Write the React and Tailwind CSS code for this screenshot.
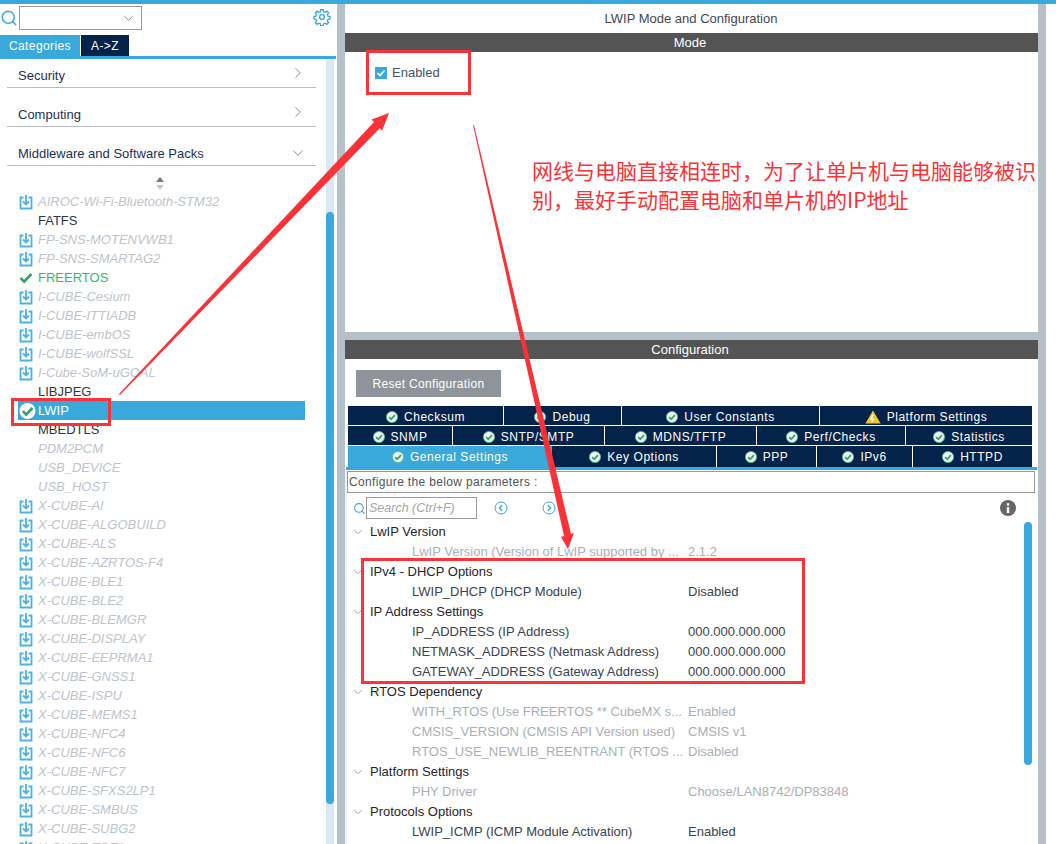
import React from 'react';
import { ChevronDown, ChevronRight, Search } from 'lucide-react';

const sideItems = [
  ['AIROC-Wi-Fi-Bluetooth-STM32', 'pack'],
  ['FATFS', 'plain'],
  ['FP-SNS-MOTENVWB1', 'pack'],
  ['FP-SNS-SMARTAG2', 'pack'],
  ['FREERTOS', 'ok'],
  ['I-CUBE-Cesium', 'pack'],
  ['I-CUBE-ITTIADB', 'pack'],
  ['I-CUBE-embOS', 'pack'],
  ['I-CUBE-wolfSSL', 'pack'],
  ['I-Cube-SoM-uGOAL', 'pack'],
  ['LIBJPEG', 'plain'],
  ['LWIP', 'selected'],
  ['MBEDTLS', 'plain'],
  ['PDM2PCM', 'off'],
  ['USB_DEVICE', 'off'],
  ['USB_HOST', 'off'],
  ['X-CUBE-AI', 'pack'],
  ['X-CUBE-ALGOBUILD', 'pack'],
  ['X-CUBE-ALS', 'pack'],
  ['X-CUBE-AZRTOS-F4', 'pack'],
  ['X-CUBE-BLE1', 'pack'],
  ['X-CUBE-BLE2', 'pack'],
  ['X-CUBE-BLEMGR', 'pack'],
  ['X-CUBE-DISPLAY', 'pack'],
  ['X-CUBE-EEPRMA1', 'pack'],
  ['X-CUBE-GNSS1', 'pack'],
  ['X-CUBE-ISPU', 'pack'],
  ['X-CUBE-MEMS1', 'pack'],
  ['X-CUBE-NFC4', 'pack'],
  ['X-CUBE-NFC6', 'pack'],
  ['X-CUBE-NFC7', 'pack'],
  ['X-CUBE-SFXS2LP1', 'pack'],
  ['X-CUBE-SMBUS', 'pack'],
  ['X-CUBE-SUBG2', 'pack'],
  ['X-CUBE-TOF1', 'pack'],
];

const tabRows = [
  { h: 'h-[19px]', pad: 'pt-[2px]', cells: [['Checksum', 'w-[156px]'], ['Debug', 'w-[118px]'], ['User Constants', 'w-[198px]'], ['Platform Settings', 'w-[212px]', 'warn']] },
  { h: 'h-[19px]', pad: 'pt-[2px]', cells: [['SNMP', 'w-[105px]'], ['SNTP/SMTP', 'w-[152px]'], ['MDNS/TFTP', 'w-[152px]'], ['Perf/Checks', 'w-[149px]'], ['Statistics', 'w-[126px]']] },
  { h: 'h-[21px]', pad: 'pt-0', cells: [['General Settings', 'w-[204px]', 'active'], ['Key Options', 'w-[165px]'], ['PPP', 'w-[100px]'], ['IPv6', 'w-[96px]'], ['HTTPD', 'w-[119px]']] },
];

const params = [
  ['LwIP Version', null, 'head'],
  ['LwIP Version (Version of LwIP supported by ...', '2.1.2', 'off'],
  ['IPv4 - DHCP Options', null, 'head'],
  ['LWIP_DHCP (DHCP Module)', 'Disabled', 'on'],
  ['IP Address Settings', null, 'head'],
  ['IP_ADDRESS (IP Address)', '000.000.000.000', 'on'],
  ['NETMASK_ADDRESS (Netmask Address)', '000.000.000.000', 'on'],
  ['GATEWAY_ADDRESS (Gateway Address)', '000.000.000.000', 'on'],
  ['RTOS Dependency', null, 'head'],
  ['WITH_RTOS (Use FREERTOS ** CubeMX s...', 'Enabled', 'off'],
  ['CMSIS_VERSION (CMSIS API Version used)', 'CMSIS v1', 'off'],
  ['RTOS_USE_NEWLIB_REENTRANT (RTOS ...', 'Disabled', 'off'],
  ['Platform Settings', null, 'head'],
  ['PHY Driver', 'Choose/LAN8742/DP83848', 'off'],
  ['Protocols Options', null, 'head'],
  ['LWIP_ICMP (ICMP Module Activation)', 'Enabled', 'on'],
];

function PackIcon() {
  return (
    <svg width="14" height="16" viewBox="0 0 14 16" fill="none" stroke="#4db2e3" strokeWidth="1.8">
      <path d="M4.5 3.5H1.5V14.5H12.5V3.5H9.5" />
      <path d="M7 1V10M4 7.5L7 10.5L10 7.5" strokeWidth="1.8" />
    </svg>
  );
}

function OkDot({ size = 12 }) {
  return (
    <svg width={size} height={size} viewBox="0 0 12 12" className="shrink-0">
      <circle cx="6" cy="6" r="5.6" fill="#e8f5ee" />
      <circle cx="6" cy="6" r="5.6" fill="none" stroke="#4fb584" strokeWidth="0.8" />
      <path d="M3.1 6.1L5.2 8.2L9 4.2" fill="none" stroke="#3a9f6e" strokeWidth="1.7" />
    </svg>
  );
}

function SideRow({ name, kind }) {
  if (kind === 'selected') {
    return (
      <div className="h-[19px] flex items-center bg-[#39a9dc] w-[287px] ml-[18px] text-white">
        <svg width="18" height="18" viewBox="0 0 18 18" className="shrink-0 ml-px">
          <circle cx="8.5" cy="9" r="8" fill="#ffffff" />
          <path d="M3.8 9.2L7.2 12.6L13.4 6" fill="none" stroke="#3a9f6e" strokeWidth="2.6" />
        </svg>
        <span className="ml-[1px] text-[13px]">{name}</span>
      </div>
    );
  }
  const text = {
    pack: 'italic text-[#bcc4cc]',
    off: 'italic text-[#bcc4cc]',
    plain: 'text-[#2f3640]',
    ok: 'text-[#3cb371]',
  }[kind];
  return (
    <div className="h-[19px] flex items-center pl-[19px]">
      <span className="w-[19px] shrink-0 flex items-center">
        {kind === 'pack' && <PackIcon />}
        {kind === 'ok' && (
          <svg width="14" height="12" viewBox="0 0 14 12" fill="none" stroke="#3a9f6e" strokeWidth="2.6">
            <path d="M1.5 6L5.2 9.6L12.5 2" />
          </svg>
        )}
      </span>
      <span className={`text-[13px] whitespace-nowrap ${text}`}>{name}</span>
    </div>
  );
}

function Category({ label, open, height }) {
  return (
    <div className={`${height} ml-[7px] w-[309px] border-b border-[#b5bcc4] flex items-end justify-between pb-[2px]`}>
      <span className="ml-[11px] text-[13px] text-[#1f2f52]">{label}</span>
      {open ? (
        <ChevronDown size={18} strokeWidth={1} className="text-[#666] mb-[1px] mr-[9px]" />
      ) : (
        <ChevronRight size={18} strokeWidth={1} className="text-[#666] mb-[3px] mr-[9px]" />
      )}
    </div>
  );
}

function Sidebar() {
  return (
    <div className="w-[337px] h-full flex flex-col overflow-hidden">
      <div className="h-[31px] flex items-start shrink-0">
        <Search size={18} strokeWidth={2} className="text-[#39a9dc] mt-[5px]" />
        <div className="ml-[1px] w-[123px] h-[24px] border border-[#999] flex items-center justify-end pr-[5px] mt-[2px]">
          <ChevronDown size={15} strokeWidth={1.2} className="text-[#666]" />
        </div>
        <svg width="18" height="18" viewBox="0 0 24 24" fill="none" stroke="#39a9dc" strokeWidth="1.8" className="ml-[171px] mt-[4px]">
          <circle cx="12" cy="12" r="3.2" />
          <path d="M10.3 2.3h3.4l.5 2.7 1.9.8 2.3-1.6 2.4 2.4-1.6 2.3.8 1.9 2.7.5v3.4l-2.7.5-.8 1.9 1.6 2.3-2.4 2.4-2.3-1.6-1.9.8-.5 2.7h-3.4l-.5-2.7-1.9-.8-2.3 1.6-2.4-2.4 1.6-2.3-.8-1.9-2.7-.5v-3.4l2.7-.5.8-1.9-1.6-2.3 2.4-2.4 2.3 1.6 1.9-.8z" />
        </svg>
      </div>
      <div className="h-[21px] flex shrink-0 text-[12px] tracking-[0.4px] text-white">
        <div className="w-[80px] bg-[#39a9dc] flex items-center justify-center">Categories</div>
        <div className="w-[48px] ml-px bg-[#03234b] flex items-center justify-center">A-&gt;Z</div>
      </div>
      <div className="h-[3px] w-[336px] bg-[#39a9dc] shrink-0" />
      <div className="flex flex-1 min-h-0">
        <div className="w-[326px] overflow-hidden">
          <Category label="Security" height="h-[29px]" />
          <Category label="Computing" height="h-[39px]" />
          <Category label="Middleware and Software Packs" height="h-[39px]" open />
          <div className="h-[26px] pt-[9px] flex items-center justify-center mr-[6px]">
            <svg width="10" height="13" viewBox="0 0 10 13">
              <path d="M5 0L9 5H1Z" fill="#777" />
              <path d="M5 13L9 8H1Z" fill="#c5c5c5" />
            </svg>
          </div>
          {sideItems.map(([name, kind]) => (
            <SideRow key={name} name={name} kind={kind} />
          ))}
        </div>
        <div className="w-[8px] bg-[#d9e8f5] pt-[153px]">
          <div className="w-[8px] h-[592px] rounded-full bg-[#39a9dc]" />
        </div>
      </div>
    </div>
  );
}

function TabCell({ label, width, flag, pad }) {
  const active = flag === 'active';
  return (
    <div className={`${width} ${pad} flex items-center justify-center gap-[5px] text-white ${active ? 'bg-[#39a9dc]' : 'bg-[#03234b] border-r border-white last:border-r-0'}`}>
      {flag === 'warn' ? (
        <svg width="16" height="14" viewBox="0 0 16 14">
          <path d="M8 .5L15.6 13.5H.4Z" fill="#f4c430" />
          <path d="M8 4.5L6 9H8L7 12" fill="none" stroke="#fff" strokeWidth="1.3" />
        </svg>
      ) : (
        <OkDot />
      )}
      <span className="ml-[1px] whitespace-nowrap">{label}</span>
    </div>
  );
}

function ParamRow({ label, value, kind }) {
  if (kind === 'head') {
    return (
      <div className="h-[20px] flex items-center">
        <ChevronDown size={14} strokeWidth={1} className="text-[#666] ml-[4px]" />
        <span className="ml-[5px] text-[#1f2430]">{label}</span>
      </div>
    );
  }
  const color = kind === 'off' ? 'text-[#a9afb6]' : 'text-[#3a4350]';
  return (
    <div className={`h-[20px] flex items-center whitespace-nowrap ${color}`}>
      <span className="ml-[65px] w-[276px] shrink-0">{label}</span>
      <span>{value}</span>
    </div>
  );
}

function MainPanel() {
  return (
    <div className="w-[693px] h-full flex flex-col overflow-hidden text-[13px]">
      <div className="h-[29px] flex items-center justify-center text-[#3f4852] shrink-0 pr-[1px]">LWIP Mode and Configuration</div>
      <div className="h-[19px] bg-[#535453] text-white flex items-center justify-center shrink-0 pr-[3px]">Mode</div>
      <div className="h-[280px] shrink-0 pt-[11px] pl-[30px]">
        <label className="flex items-center gap-[5px] text-[#49525c]">
          <span className="w-[12px] h-[12px] bg-[#39a9dc] flex items-center justify-center">
            <svg width="10" height="10" viewBox="0 0 10 10" fill="none" stroke="#fff" strokeWidth="1.6">
              <path d="M1.5 5L4 7.5L8.5 2.5" />
            </svg>
          </span>
          Enabled
        </label>
      </div>
      <div className="h-[8px] bg-[#b5c0c8] shrink-0" />
      <div className="h-[19px] bg-[#535453] text-white flex items-center justify-center shrink-0 pr-[3px]">Configuration</div>
      <div className="pt-[11px] pl-[11px] shrink-0">
        <div className="w-[145px] h-[27px] bg-[#8e9499] text-white flex items-center justify-center tracking-[0.3px] text-[12px]">Reset Configuration</div>
      </div>
      <div className="mt-[9px] ml-[3px] w-[684px] shrink-0 flex flex-col gap-px text-[12px] tracking-[0.55px]">
        {tabRows.map((row, i) => (
          <div key={i} className={`flex ${row.h}`}>
            {row.cells.map(([label, width, flag]) => (
              <TabCell key={label} label={label} width={width} flag={flag} pad={row.pad} />
            ))}
          </div>
        ))}
      </div>
      <div className="h-[3px] ml-[1px] w-[691px] bg-[#39a9dc] shrink-0" />
      <div className="flex flex-1 min-h-0">
        <div className="w-[2px] bg-[#f2f2f2] shrink-0" />
        <div className="w-[677px] overflow-visible">
          <div className="w-[688px] h-[22px] mt-px border border-[#999] flex items-center pl-px text-[#4c5560] text-[12px] tracking-[0.35px] whitespace-nowrap bg-white relative">Configure the below parameters :</div>
          <div className="h-[26px] mt-[2px] flex items-center">
            <Search size={13} strokeWidth={2} className="text-[#39a9dc] ml-[6px] shrink-0" />
            <div className="w-[111px] h-[22px] border border-[#999] flex items-center pl-[2px] italic text-[#a5a5a5] text-[12.5px] shrink-0">Search (Ctrl+F)</div>
            <svg width="14" height="14" viewBox="0 0 14 14" fill="none" stroke="#39a9dc" strokeWidth="1" className="ml-[17px] shrink-0">
              <circle cx="7" cy="7" r="6" />
              <path d="M8.2 4.2L5.4 7L8.2 9.8" strokeWidth="1.4" />
            </svg>
            <svg width="14" height="14" viewBox="0 0 14 14" fill="none" stroke="#39a9dc" strokeWidth="1" className="ml-[34px] shrink-0">
              <circle cx="7" cy="7" r="6" />
              <path d="M5.8 4.2L8.6 7L5.8 9.8" strokeWidth="1.4" />
            </svg>
            <svg width="16" height="16" viewBox="0 0 16 16" className="ml-[444px] shrink-0">
              <circle cx="8" cy="8" r="8" fill="#666" />
              <rect x="6.8" y="7" width="2.4" height="6" fill="#fff" />
              <rect x="6.8" y="3.2" width="2.4" height="2.4" fill="#fff" />
            </svg>
          </div>
          <div className="pt-px">
            {params.map(([label, value, kind]) => (
              <ParamRow key={label} label={label} value={value} kind={kind} />
            ))}
          </div>
        </div>
        <div className="w-[8px] pt-[52px]">
          <div className="w-[8px] h-[243px] rounded-full bg-[#39a9dc]" />
        </div>
      </div>
    </div>
  );
}

function Annotations() {
  return (
    <>
      <div className="absolute left-[366px] top-[50px] w-[105px] h-[45px] border-[3px] border-[#fb3338]" />
      <div className="absolute left-[11px] top-[398px] w-[100px] h-[28px] border-[3px] border-[#fb3338]" />
      <div className="absolute left-[361px] top-[558px] w-[444px] h-[126px] border-[3px] border-[#fb3338]" />
      <svg width="1056" height="844" className="absolute left-0 top-0 pointer-events-none">
        <polygon points="119,394 374,122 371.5,119.5 389,113 382,131 380,128 120,395" fill="#fb3338" />
        <polygon points="473,125 564,536 561,537 568,549 574,533 571,534 474,125" fill="#fb3338" />
      </svg>
      <div className="absolute left-[532px] top-[156px] w-[510px] text-[21px] leading-[29px] text-[#fb3338]" style={{ fontFamily: '"Noto Sans CJK SC", "Liberation Sans", sans-serif' }}>
        网线与电脑直接相连时，为了让单片机与电脑能够被识别，最好手动配置电脑和单片机的IP地址
      </div>
    </>
  );
}

export default function App() {
  return (
    <div className="relative w-[1056px] h-[844px] overflow-hidden bg-white flex flex-col" style={{ fontFamily: '"Liberation Sans", Arial, sans-serif' }}>
      <div className="h-[4px] bg-[#39a9dc] shrink-0" />
      <div className="flex flex-1 min-h-0">
        <Sidebar />
        <div className="w-[8px] bg-[#b5c0c8]" />
        <MainPanel />
        <div className="w-[8px] bg-[#b5c0c8]" />
      </div>
      <Annotations />
    </div>
  );
}
